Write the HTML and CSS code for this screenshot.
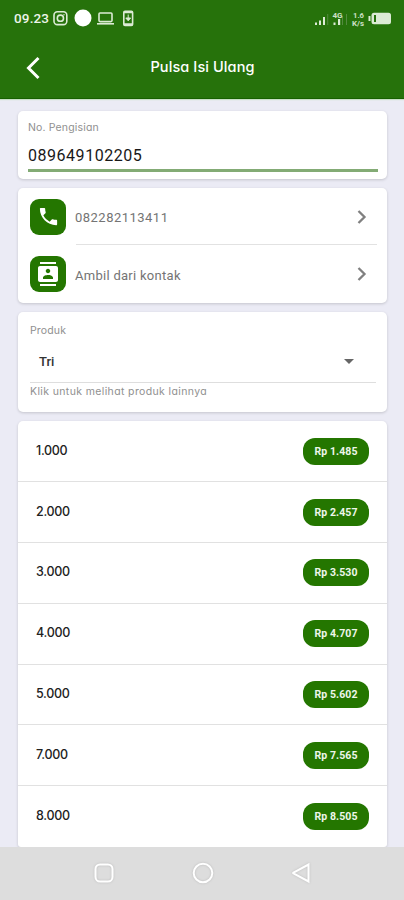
FILE: index.html
```html
<!DOCTYPE html>
<html lang="id">
<head>
<meta charset="utf-8">
<title>Pulsa Isi Ulang</title>
<link rel="stylesheet" href="styles.css">
</head>
<body>
<div class="phone">
  <header class="header">
    <div class="status">
      <span class="clock">09.23</span>
      <svg class="status-left" width="86" height="20" viewBox="0 0 86 20" fill="none" stroke="#dcebd5" stroke-width="1.6">
        <rect x="2" y="3.8" width="12.8" height="12.8" rx="3.4"/><circle cx="8.4" cy="10.2" r="3.1"/><circle cx="12" cy="6.7" r=".7" fill="#dcebd5" stroke="none"/>
        <circle cx="31" cy="10" r="8.5" fill="#fff" stroke="none"/>
        <rect x="47" y="5" width="13" height="8.6" rx="1"/><path d="M45 15.8h17"/>
        <g transform="translate(.8)"><rect x="71" y="3.2" width="8.8" height="14.2" rx="1.2"/><path d="M71 4.3h9M71 16.3h9" stroke-width="2"/><path d="M75.4 6.5v5M73 10l2.4 2.8L77.8 10z" fill="#dcebd5" stroke-width="1"/></g>
      </svg>
      <span class="grow"></span>
      <svg class="status-right" width="80" height="20" viewBox="0 0 80 20">
        <g fill="#dcebd5"><path d="M1 14.500h2v2.500H1zM5 12.500h2v4.500H5zM9 9h2v8H9z"/><path d="M19.500 14.500h2v2.500h-2zM24 11h2.200v6H24z"/></g>
        <path d="M13.200 6h1v11h-1zM28 8h1v9h-1zM32 6h1v11h-1z" fill="#548a40"/>
        <g class="tiny"><text x="18.500" y="9.500">4G</text><text x="39" y="10" textLength="11" lengthAdjust="spacingAndGlyphs">1.6</text><text x="38" y="17.500" textLength="12" lengthAdjust="spacingAndGlyphs">K/s</text></g>
        <rect x="57.500" y="4.800" width="19.500" height="11.500" rx="2.500" fill="#dcebd5"/><path d="M60 7h2v7h-2z" fill="#26720b"/><path d="M54.500 8h2v5h-2z" fill="#dcebd5"/>
      </svg>
    </div>
    <div class="title-bar">
      <svg class="back" width="16" height="26" viewBox="0 0 16 26" fill="none" stroke="#fff" stroke-width="3"><path d="M13.500 3 3.500 13l10 10"/></svg>
      <h1>Pulsa Isi Ulang</h1>
    </div>
  </header>
  <main class="content">
    <section class="card number-card">
      <label class="caption">No. Pengisian</label>
      <div class="number">089649102205</div>
    </section>
    <section class="card picks">
      <div class="pick first">
        <span class="tile"><svg width="23" height="23" viewBox="0 0 24 24" fill="#fff"><path d="M6.62 10.79c1.44 2.83 3.76 5.14 6.59 6.59l2.2-2.2c.27-.27.67-.36 1.02-.24 1.12.37 2.33.57 3.57.57.55 0 1 .45 1 1V20c0 .55-.45 1-1 1C10.61 21 3 13.39 3 4c0-.55.45-1 1-1h3.5c.55 0 1 .45 1 1 0 1.25.2 2.45.57 3.57.11.35.03.74-.25 1.02l-2.2 2.2z"/></svg></span>
        <span class="pick-text">082282113411</span>
        <svg class="chev" width="12" height="16" viewBox="0 0 12 16" fill="none" stroke="#808080" stroke-width="2.3"><path d="m2.5 2 6 6-6 6"/></svg>
      </div>
      <div class="pick">
        <span class="tile"><svg width="24" height="24" viewBox="0 0 24 24" fill="#fff"><path d="M20 0H4v2h16V0zM4 24h16v-2H4v2zM20 4H4c-1.100 0-2 .9-2 2v12c0 1.100.9 2 2 2h16c1.100 0 2-.9 2-2V6c0-1.100-.9-2-2-2zm-8 2.750c1.240 0 2.250 1.010 2.250 2.250s-1.010 2.250-2.250 2.250S9.750 10.240 9.750 9 10.760 6.750 12 6.750zM17 17H7v-1.500c0-1.670 3.330-2.500 5-2.500s5 .83 5 2.500V17z"/></svg></span>
        <span class="pick-text contact">Ambil dari kontak</span>
        <svg class="chev" width="12" height="16" viewBox="0 0 12 16" fill="none" stroke="#808080" stroke-width="2.3"><path d="m2.500 2 6 6-6 6"/></svg>
      </div>
    </section>
    <section class="card product">
      <label class="caption product-label">Produk</label>
      <div class="select"><span>Tri</span><i class="caret"></i></div>
      <div class="hint">Klik untuk melihat produk lainnya</div>
    </section>
    <section class="card prices">
      <div class="row"><span class="amount">1.000</span><span class="pill">Rp 1.485</span></div>
      <div class="row"><span class="amount">2.000</span><span class="pill">Rp 2.457</span></div>
      <div class="row"><span class="amount">3.000</span><span class="pill">Rp 3.530</span></div>
      <div class="row"><span class="amount">4.000</span><span class="pill">Rp 4.707</span></div>
      <div class="row"><span class="amount">5.000</span><span class="pill">Rp 5.602</span></div>
      <div class="row"><span class="amount">7.000</span><span class="pill">Rp 7.565</span></div>
      <div class="row"><span class="amount">8.000</span><span class="pill">Rp 8.505</span></div>
    </section>
  </main>
  <nav class="nav">
    <svg width="22" height="22" viewBox="0 0 22 22"><rect x="2.500" y="2.500" width="17" height="17" rx="4.500"/></svg>
    <svg width="22" height="22" viewBox="0 0 22 22"><circle cx="11" cy="11" r="9.300"/></svg>
    <svg width="22" height="22" viewBox="0 0 22 22"><path d="M17.500 2.500v17L2.500 11.500q-.8-.5 0-1z"/></svg>
  </nav>
</div>
</body>
</html>
```
FILE: styles.css
```css
* { box-sizing: border-box; }
body { margin: 0; background: #ebebf5; font-family: Inter, "Open Sans", sans-serif; font-feature-settings: "cv11"; }
.phone { width: 404px; height: 900px; display: flex; flex-direction: column; overflow: hidden; }
.header { height: 99px; background: #26720b; border-bottom: 1px solid #176000; box-shadow: 0 1px 1px #c9dfc6; color: #fff; flex: none; }
.status { height: 36px; padding: 0 10px 0 14px; display: flex; align-items: center; }
.clock { font: 500 13.5px Roboto, sans-serif; letter-spacing: .15px; width: 38px; color: #edf5e9; }
.grow { flex: 1; }
.tiny { font: 700 8px Roboto, sans-serif; fill: #cfe0c7; }
.title-bar { height: 62px; display: grid; grid-template-columns: 46px 1fr 46px; align-items: center; padding: 0 0 0 1px; }
.back { margin: 2px 0 0 24px; }
h1 { margin: 0; font-size: 14.500px; font-weight: 500; text-align: center; line-height: 20px; letter-spacing: .1px; }
.content { flex: none; height: 747.500px; padding: 12px 17px 0 18px; display: flex; flex-direction: column; gap: 9px; }
.card { background: #fff; border-radius: 5px; box-shadow: 0 1px 3px rgba(0,0,0,.17); flex: none; }
.caption { display: block; font-size: 10.500px; line-height: 14px; color: #909090; letter-spacing: .15px; }
.number-card { height: 68px; padding: 10px 9px 0 10px; }
.number { margin-top: 8px; height: 29px; border-bottom: 3px solid #83ab75; font: 400 16px/25px Roboto, sans-serif; letter-spacing: .53px; color: #181818; }
.picks { height: 114.500px; padding: 0 11px 0 12px; }
.pick { height: 57px; display: flex; align-items: center; position: relative; }
.pick.first::after { content: ""; position: absolute; left: 46px; right: -1px; bottom: 0; border-bottom: 1px solid #e2e2e2; }
.tile { width: 36px; height: 36px; border-radius: 9px; background: #247600; display: flex; align-items: center; justify-content: center; margin-right: 9px; }
.pick-text { flex: 1; padding-top: 2px; font: 400 13px Roboto, sans-serif; letter-spacing: .48px; color: #747474; }
.contact { padding-top: 4px; letter-spacing: .28px; }
.chev { margin: 1px 8px 0 0; }
.product { height: 100.500px; padding: 12px 11px 0 12px; }
.select { height: 46px; border-bottom: 1px solid #dedede; padding: 4px 22px 0 9px; display: flex; align-items: center; justify-content: space-between; font: 500 13px Roboto, sans-serif; color: #333; letter-spacing: 0; }
.product-label { height: 13px; }
.caret { border: 5.500px solid transparent; border-top: 5.500px solid #666; border-bottom: 0; }
.hint { font-size: 10.500px; line-height: 14px; margin-top: 2px; color: #909090; white-space: nowrap; letter-spacing: .37px; }
.prices { height: 425.500px; border-radius: 5px 5px 3px 3px; }
.row { height: 60.800px; padding: 0 18px; display: flex; align-items: center; justify-content: space-between; }
.row:first-child { height: 60.200px; }
.row + .row { border-top: 1px solid #e1e1e1; }
.amount { font-size: 12.500px; font-weight: 500; color: #222; letter-spacing: -.3px; margin-top: -2px; }
.pill { width: 66px; height: 27px; border-radius: 12px; background: #247600; color: #eef6ea; display: flex; align-items: center; justify-content: center; font: 700 10.500px Roboto, sans-serif; letter-spacing: .1px; }
.nav { flex: 1; z-index: 1; background: #ddd; display: flex; justify-content: center; gap: 77px; padding: 15px 0 0 2px; }
.nav svg { fill: none; stroke: #fff; stroke-width: 2; filter: drop-shadow(0 0 1px #bbb); }
```
